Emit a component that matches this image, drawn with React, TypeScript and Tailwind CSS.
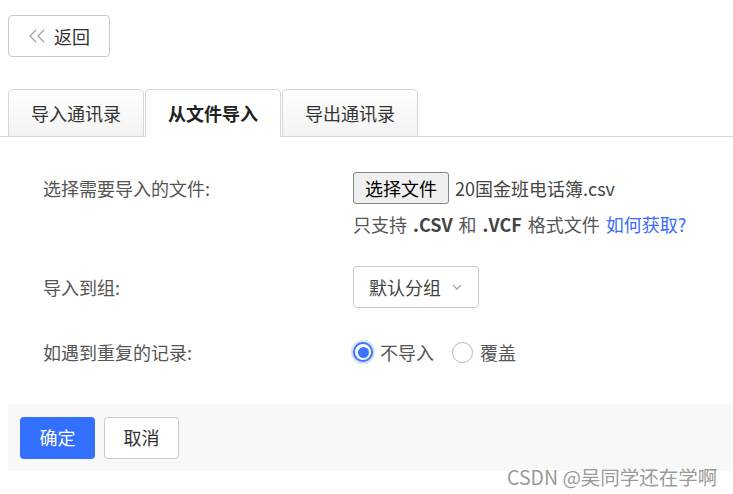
import React from 'react';

const FONT = { fontFamily: '"Microsoft YaHei", "Noto Sans CJK SC", "Noto Sans", sans-serif' };

const tabs = ['导入通讯录', '从文件导入', '导出通讯录'];

const DoubleLeft: React.FC = () => (
  <svg width="18" height="14" viewBox="0 0 18 14" fill="none" stroke="#9aa0a8" strokeWidth="1.2">
    <polyline points="8,1 2,7 8,13" />
    <polyline points="16,1 10,7 16,13" />
  </svg>
);

const Chevron: React.FC = () => (
  <svg width="10" height="6" viewBox="0 0 10 6" fill="none" stroke="#a0a4ab" strokeWidth="1.3">
    <polyline points="1,1 5,5 9,1" />
  </svg>
);

const Radio: React.FC<{ checked?: boolean; label: string }> = ({ checked, label }) => (
  <label className="flex items-center gap-[7px]">
    {checked ? (
      <span className="flex h-[20px] w-[20px] items-center justify-center rounded-full border-2 border-[#3c74ff] bg-white shadow-[0_0_0_2px_rgba(60,116,255,0.22)]">
        <span className="h-[11px] w-[11px] rounded-full bg-[#3c74ff]" />
      </span>
    ) : (
      <span className="h-[21px] w-[21px] rounded-full border-[1.5px] border-[#b4b4b4] bg-white" />
    )}
    <span className="text-[18px] text-[#555]">{label}</span>
  </label>
);

export default function App() {
  return (
    <div className="relative h-[494px] w-[733px] overflow-hidden bg-white font-normal" style={FONT}>
      <div className="pl-2 pt-[15px]">
        <button className="flex h-[42px] w-[102px] items-center gap-[8px] rounded-[4px] border border-[#c6cad2] bg-white pl-[19px] text-[18px] text-[#333]">
          <DoubleLeft />
          <span>返回</span>
        </button>
      </div>

      <div className="mt-8 flex gap-px border-b border-[#d6d6d6] pl-2">
        {tabs.map((t, i) => {
          const active = i === 1;
          return (
            <div
              key={t}
              className={`-mb-px flex h-[48px] w-[136px] items-center justify-center rounded-t-[5px] border border-[#d6d6d6] text-[18px] ${
                active ? 'border-b-white bg-white font-bold text-[#222]' : 'bg-gradient-to-b from-white to-[#f3f3f3] text-[#333]'
              }`}
            >
              {t}
            </div>
          );
        })}
      </div>

      <div className="pl-[43px] pt-[35px] text-[18px] text-[#555]">
        <div className="flex">
          <div className="w-[310px] leading-[32px]">选择需要导入的文件:</div>
          <div>
            <div className="flex items-center gap-[6px]">
              <button className="h-[32px] w-[96px] rounded-[3px] border border-[#858585] bg-[#efefef] text-[18px] leading-none text-black">
                选择文件
              </button>
              <span className="text-[#444]">20国金班电话簿.csv</span>
            </div>
            <div className="mt-[8px] leading-[24px] [word-spacing:2px]">
              只支持 <b className="text-[#444]">.CSV</b> 和 <b className="text-[#444]">.VCF</b> 格式文件{' '}
              <a className="text-[#3a6cff]">如何获取?</a>
            </div>
          </div>
        </div>

        <div className="mt-[30px] flex items-center">
          <div className="w-[310px]">导入到组:</div>
          <div className="flex h-[42px] w-[126px] items-center justify-between rounded-[4px] border border-[#c6cad2] pl-[15px] pr-[16px] text-[#444]">
            <span>默认分组</span>
            <Chevron />
          </div>
        </div>

        <div className="mt-[32px] flex h-[24px] items-center">
          <div className="w-[310px]">如遇到重复的记录:</div>
          <div className="flex items-center gap-[18px]">
            <Radio checked label="不导入" />
            <Radio label="覆盖" />
          </div>
        </div>
      </div>

      <div className="ml-2 mt-[40px] flex h-[67px] items-center gap-[9px] bg-[#f8f8f8] pl-[12px]">
        <button className="h-[42px] w-[75px] rounded-[4px] bg-[#3370ff] text-[18px] text-white">确定</button>
        <button className="h-[42px] w-[75px] rounded-[4px] border border-[#c6cad2] bg-white text-[18px] text-[#333]">取消</button>
      </div>

      <div className="absolute left-[507px] top-[462px] text-[19.5px] text-[#9a9a9a]">CSDN @吴同学还在学啊</div>
    </div>
  );
}
